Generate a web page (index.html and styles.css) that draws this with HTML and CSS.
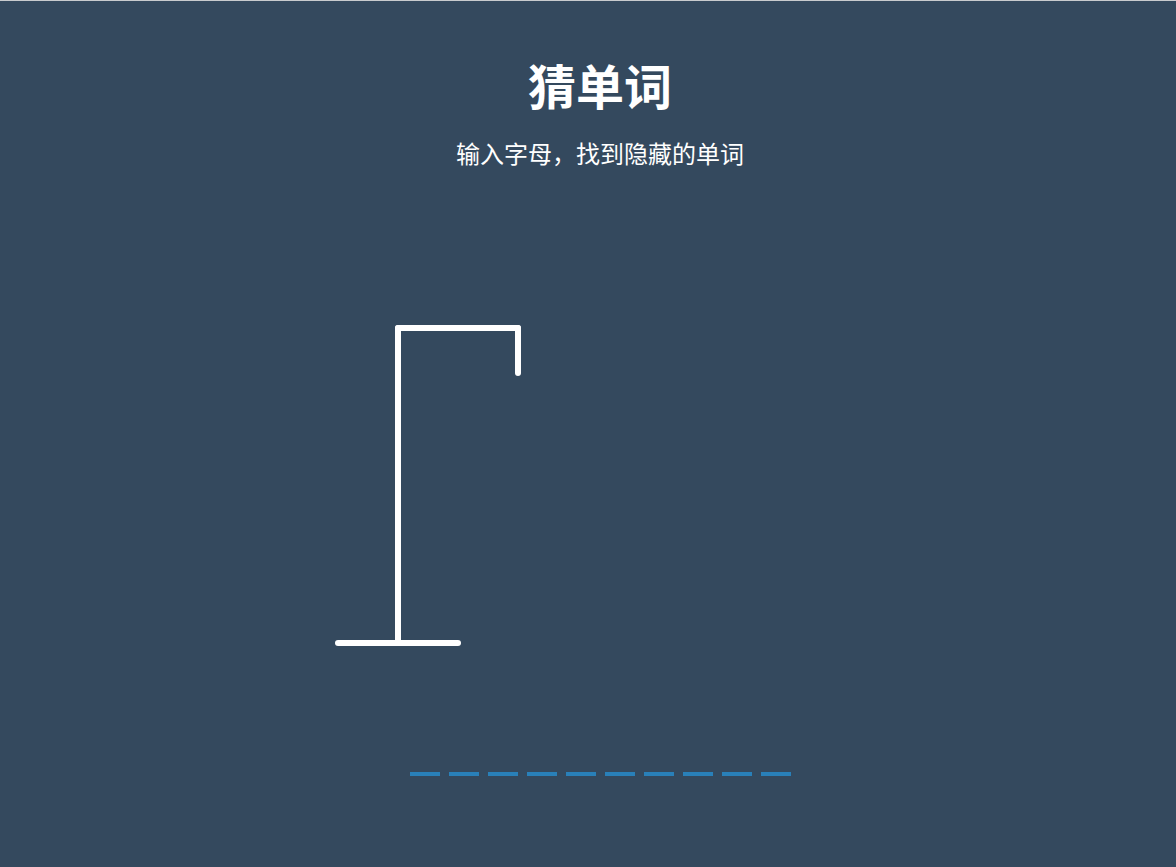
FILE: index.html
```html
<!DOCTYPE html>
<html lang="zh-CN">
<head>
<meta charset="utf-8">
<title>猜单词</title>
<link rel="stylesheet" href="styles.css">
</head>
<body>
<main class="page">
  <header class="header">
    <h1 class="title">猜单词</h1>
    <p class="subtitle">输入字母，找到隐藏的单词</p>
  </header>
  <section class="game">
    <svg class="figure" width="300" height="375" viewBox="0 0 200 250">
      <line x1="60" y1="20" x2="140" y2="20"/>
      <line x1="140" y1="20" x2="140" y2="50"/>
      <line x1="60" y1="20" x2="60" y2="230"/>
      <line x1="20" y1="230" x2="100" y2="230"/>
    </svg>
  </section>
  <div class="word">
    <span class="letter"></span><span class="letter"></span><span class="letter"></span><span class="letter"></span><span class="letter"></span><span class="letter"></span><span class="letter"></span><span class="letter"></span><span class="letter"></span><span class="letter"></span>
  </div>
</main>
</body>
</html>
```
FILE: styles.css
```css
html, body {
  margin: 0;
  padding: 0;
  height: 100%;
}
body {
  background: #34495e;
  color: #fff;
  font-family: "Noto Sans CJK SC", "Noto Sans", sans-serif;
  border-top: 1px solid #c9cbce;
  box-sizing: border-box;
  overflow: hidden;
}
.page {
  display: flex;
  flex-direction: column;
  align-items: center;
  padding-left: 24px;
}
.header {
  display: flex;
  flex-direction: column;
  align-items: center;
  padding-top: 53px;
}
.title {
  margin: 0;
  font-size: 48px;
  line-height: 60px;
  font-weight: 700;
}
.subtitle {
  margin: 24px 0 0;
  font-size: 24px;
  line-height: 30px;
}
.game {
  width: 584px;
  margin-top: 130px;
  display: flex;
}
.figure line {
  stroke: #fff;
  stroke-width: 4;
  stroke-linecap: round;
  fill: none;
}
.word {
  display: flex;
  gap: 9px;
  margin-top: 99px;
}
.letter {
  width: 30px;
  height: 4px;
  background: #2980b9;
}
```
